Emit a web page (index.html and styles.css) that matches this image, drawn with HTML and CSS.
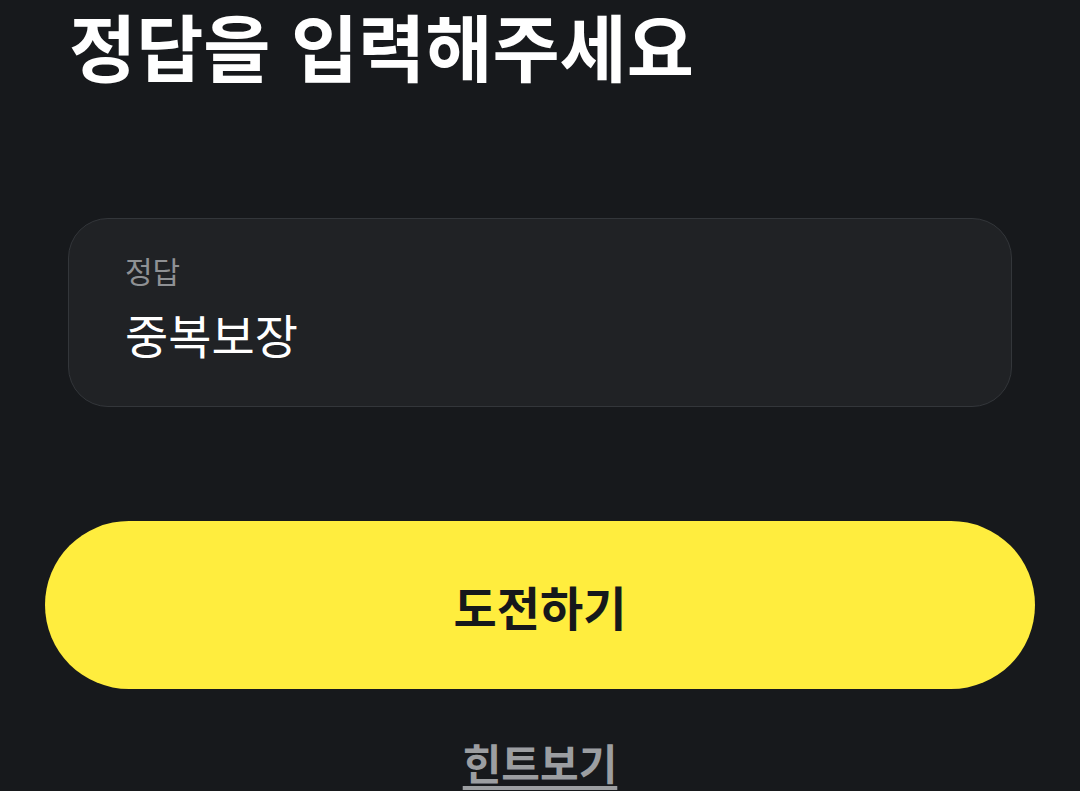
FILE: index.html
```html
<!DOCTYPE html>
<html lang="ko">
<head>
    <meta charset="UTF-8">
    <meta name="viewport" content="width=device-width, initial-scale=1.0">
    <title>정답 입력</title>
    <link rel="stylesheet" href="styles.css">
</head>
<body>
    <div class="page">
        <h1 class="title">정답을 입력해주세요</h1>

        <div class="answer-field">
            <div class="field-label">정답</div>
            <div class="field-value">중복보장</div>
        </div>

        <button class="submit-button">도전하기</button>

        <a href="#" class="hint-link">힌트보기</a>
    </div>
</body>
</html>
```

FILE: styles.css
```css
body {
    margin: 0;
    background-color: #17191c;
    font-family: "Noto Sans CJK KR", "Noto Sans", sans-serif;
    color: #ffffff;
}

.page {
    display: flex;
    flex-direction: column;
    padding: 0 45px;
}

.title {
    margin: 0 0 0 24px;
    font-size: 73px;
    font-weight: 700;
    line-height: 88px;
    white-space: nowrap;
}

.answer-field {
    margin: 130px 23px 0 23px;
    height: 189px;
    box-sizing: border-box;
    background-color: #202225;
    border: 1px solid #33363a;
    border-radius: 40px;
    padding: 32px 56px 0 56px;
}

.field-label {
    font-size: 30px;
    color: #8f9194;
    line-height: 38px;
}

.field-value {
    margin-top: 17px;
    font-size: 47px;
    color: #ffffff;
    line-height: 56px;
}

.submit-button {
    margin-top: 114px;
    height: 168px;
    border: none;
    border-radius: 84px;
    background-color: #ffed3e;
    color: #16181b;
    font-family: "Noto Sans CJK KR", "Noto Sans", sans-serif;
    font-size: 47px;
    font-weight: 700;
}

.hint-link {
    align-self: center;
    margin-top: 45px;
    font-size: 42px;
    font-weight: 700;
    color: #9c9ea1;
    text-decoration: underline;
    text-underline-offset: 6px;
    line-height: 56px;
}
```
